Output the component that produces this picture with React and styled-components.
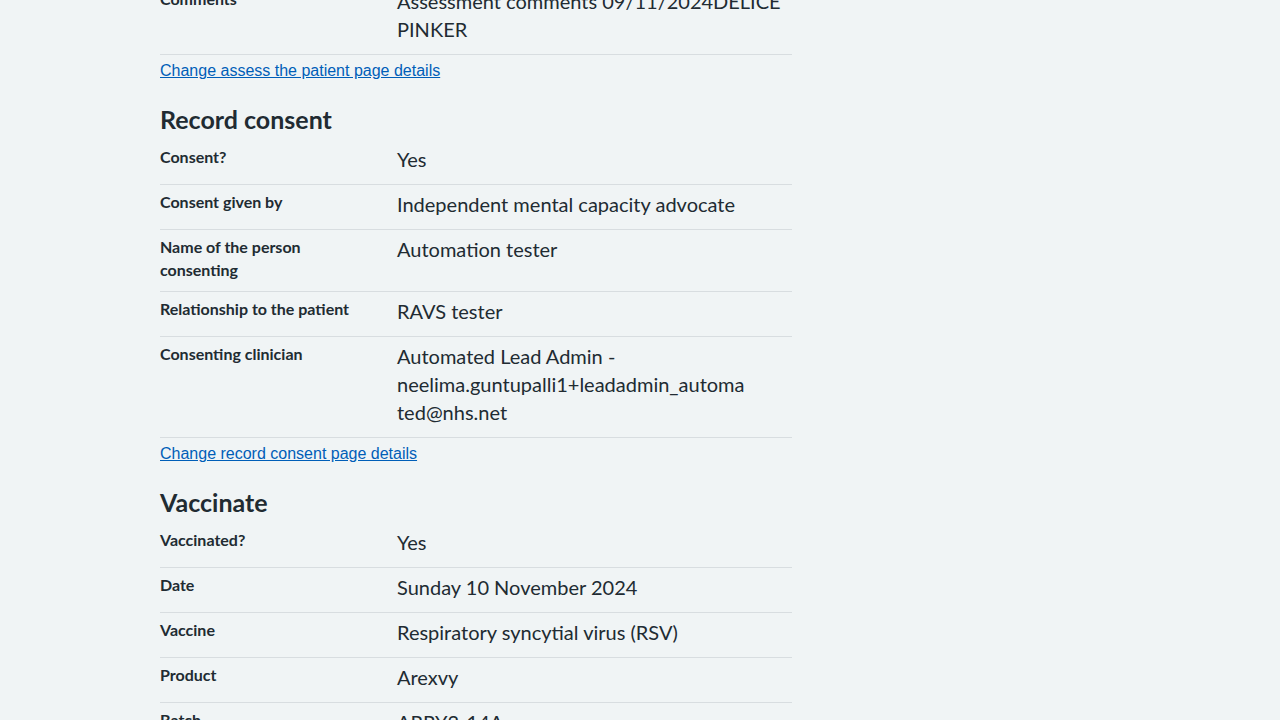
import React from "react";
import styled, { createGlobalStyle } from "styled-components";

const GlobalStyle = createGlobalStyle`
  html, body {
    margin: 0;
    padding: 0;
    background: #f0f4f5;
    color: #212b32;
    font-family: Lato, "Noto Sans", Arial, sans-serif;
  }
  body {
    overflow: hidden;
    height: 720px;
  }
`;

const sections = [
  {
    title: "Record consent",
    link: "Change record consent page details",
    rows: [
      ["Consent?", "Yes"],
      ["Consent given by", "Independent mental capacity advocate"],
      ["Name of the person consenting", "Automation tester"],
      ["Relationship to the patient", "RAVS tester"],
      [
        "Consenting clinician",
        <>
          Automated Lead Admin - neelima.guntupalli1+leadadmin_automa
          <wbr />
          ted@nhs.net
        </>,
      ],
    ],
  },
  {
    title: "Vaccinate",
    rows: [
      ["Vaccinated?", "Yes"],
      ["Date", "Sunday 10 November 2024"],
      ["Vaccine", "Respiratory syncytial virus (RSV)"],
      ["Product", "Arexvy"],
      ["Batch", "ARRY2-14A"],
    ],
  },
];

export default function App() {
  return (
    <>
      <GlobalStyle />
      <Main>
        <SummaryList>
          <Row>
            <Key>Comments</Key>
            <Value>Assessment comments 09/11/2024DELICE PINKER</Value>
          </Row>
        </SummaryList>
        <ChangeLink href="#">Change assess the patient page details</ChangeLink>

        {sections.map((s) => (
          <Section key={s.title}>
            <Heading>{s.title}</Heading>
            <SummaryList>
              {s.rows.map(([k, v]) => (
                <Row key={k}>
                  <Key>{k}</Key>
                  <Value>{v}</Value>
                </Row>
              ))}
            </SummaryList>
            {s.link && <ChangeLink href="#">{s.link}</ChangeLink>}
          </Section>
        ))}
      </Main>
    </>
  );
}

const Main = styled.main`
  width: 632px;
  margin: -18px 0 0 160px;
`;

const Section = styled.section`
  margin-top: 21px;
`;

const Heading = styled.h2`
  margin: 0 0 6px;
  font-size: 25px;
  line-height: 30px;
  font-weight: 700;
  color: #212b32;
`;

const SummaryList = styled.dl`
  margin: 0;
`;

const Row = styled.div`
  display: grid;
  grid-template-columns: 237px 1fr;
  align-items: start;
  border-bottom: 1px solid #d8dde0;
`;

const Key = styled.dt`
  padding: 5px 24px 10px 0;
  font-size: 16px;
  line-height: 23px;
  font-weight: 700;
`;

const Value = styled.dd`
  margin: 0;
  padding: 5px 0 11px 0;
  font-size: 20px;
  line-height: 28px;
  overflow-wrap: break-word;
`;

const ChangeLink = styled.a`
  display: inline-block;
  margin-top: 4px;
  font-family: "Liberation Sans", Arial, sans-serif;
  font-size: 16px;
  line-height: 24px;
  color: #005eb8;
  text-decoration: underline;
`;
